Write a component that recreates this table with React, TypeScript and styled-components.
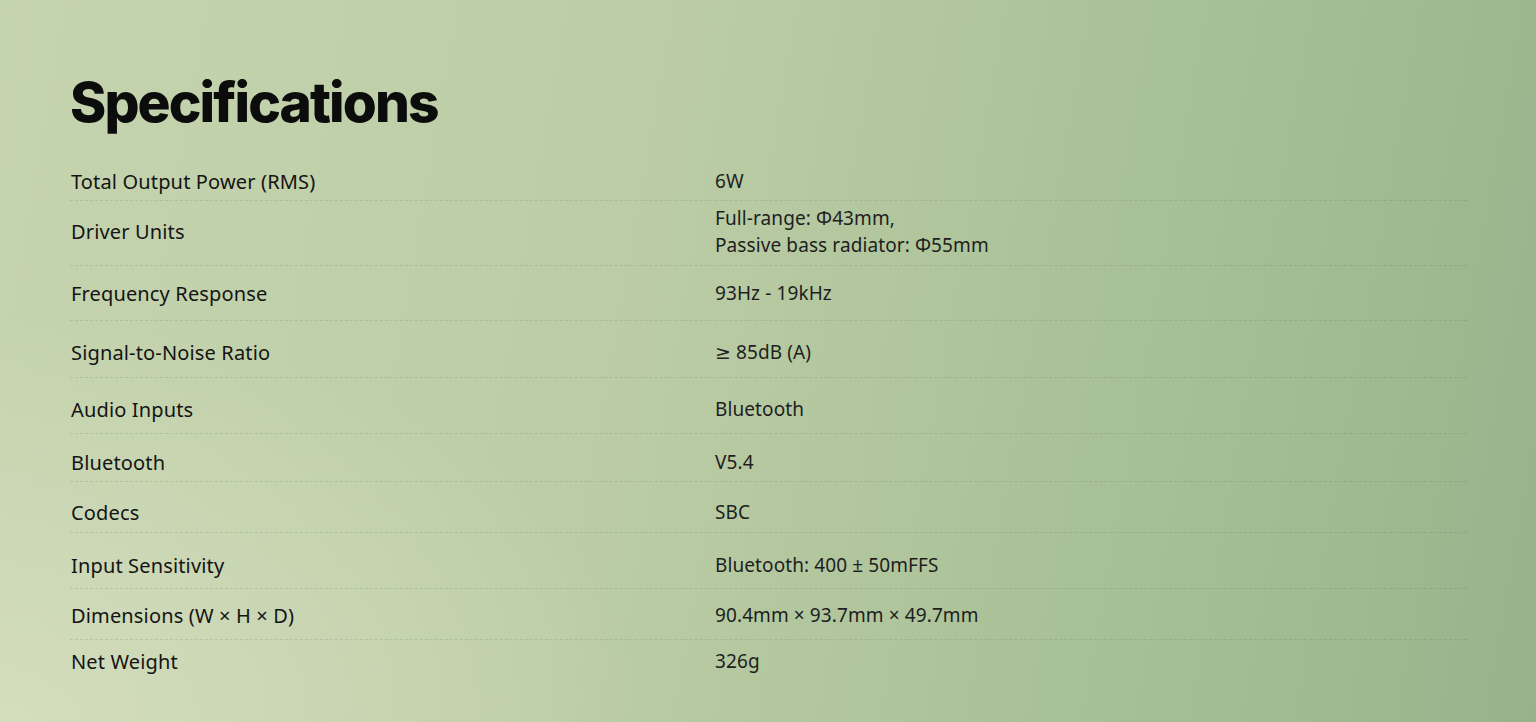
import React from "react";
import styled, { createGlobalStyle } from "styled-components";

const GlobalStyle = createGlobalStyle`
	html, body {
		margin: 0;
		padding: 0;
	}
	body {
		font-family: "Noto Sans", "DejaVu Sans", sans-serif;
	}
`;

// --- page ---
const Page = styled.div`
	width: 100%;
	min-height: 722px;
	box-sizing: border-box;
	padding: 66px 69px 40px 70px;
	background:
		radial-gradient(ellipse 60% 80% at 0% 100%, rgba(214, 222, 192, 0.9), rgba(214, 222, 192, 0) 70%),
		linear-gradient(100deg, #c5d4ae 0%, #bccda6 40%, #a9c197 70%, #98b38c 100%);
`;

const Title = styled.h1`
	margin: 0 0 30px 0;
	font-family: Inter, "Noto Sans", sans-serif;
	font-weight: 800;
	font-size: 55px;
	line-height: 72px;
	letter-spacing: -1.9px;
	color: #0c0c0c;
`;

// --- list ---
const SpecList = styled.div`
	display: flex;
	flex-direction: column;
`;

const SpecRow = styled.div<{ $top: number; $bottom: number; $last?: boolean }>`
	display: grid;
	grid-template-columns: 645px 1fr;
	align-items: center;
	padding: ${({ $top, $bottom }) => `${$top}px 0 ${$bottom}px 0`};
	border-bottom: ${({ $last }) => ($last ? "none" : "1px dashed rgba(60, 80, 50, 0.14)")};
`;

const Label = styled.div`
	padding-left: 1px;
	font-size: 20px;
	line-height: 26px;
	color: #141414;
	letter-spacing: 0.15px;
`;

const Value = styled.div`
	font-size: 19px;
	line-height: 27px;
	color: #1e1e1e;
	letter-spacing: 0.1px;
`;

const specs: { label: string; value: string[]; top: number; bottom: number }[] = [
	{ label: "Total Output Power (RMS)", value: ["6W"], top: 0, bottom: 5 },
	{ label: "Driver Units", value: ["Full-range: Φ43mm,", "Passive bass radiator: Φ55mm"], top: 4, bottom: 6 },
	{ label: "Frequency Response", value: ["93Hz - 19kHz"], top: 14, bottom: 13 },
	{ label: "Signal-to-Noise Ratio", value: ["≥ 85dB (A)"], top: 18, bottom: 11 },
	{ label: "Audio Inputs", value: ["Bluetooth"], top: 18, bottom: 10 },
	{ label: "Bluetooth", value: ["V5.4"], top: 15, bottom: 5 },
	{ label: "Codecs", value: ["SBC"], top: 17, bottom: 6 },
	{ label: "Input Sensitivity", value: ["Bluetooth: 400 ± 50mFFS"], top: 19, bottom: 9 },
	{ label: "Dimensions (W × H × D)", value: ["90.4mm × 93.7mm × 49.7mm"], top: 13, bottom: 10 },
	{ label: "Net Weight", value: ["326g"], top: 8, bottom: 0 },
];

export default function App() {
	return (
		<>
			<GlobalStyle />
			<Page>
				<Title>Specifications</Title>
				<SpecList>
					{specs.map((s, i) => (
						<SpecRow key={s.label} $top={s.top} $bottom={s.bottom} $last={i === specs.length - 1}>
							<Label>{s.label}</Label>
							<Value>
								{s.value.map((v) => (
									<div key={v}>{v}</div>
								))}
							</Value>
						</SpecRow>
					))}
				</SpecList>
			</Page>
		</>
	);
}
